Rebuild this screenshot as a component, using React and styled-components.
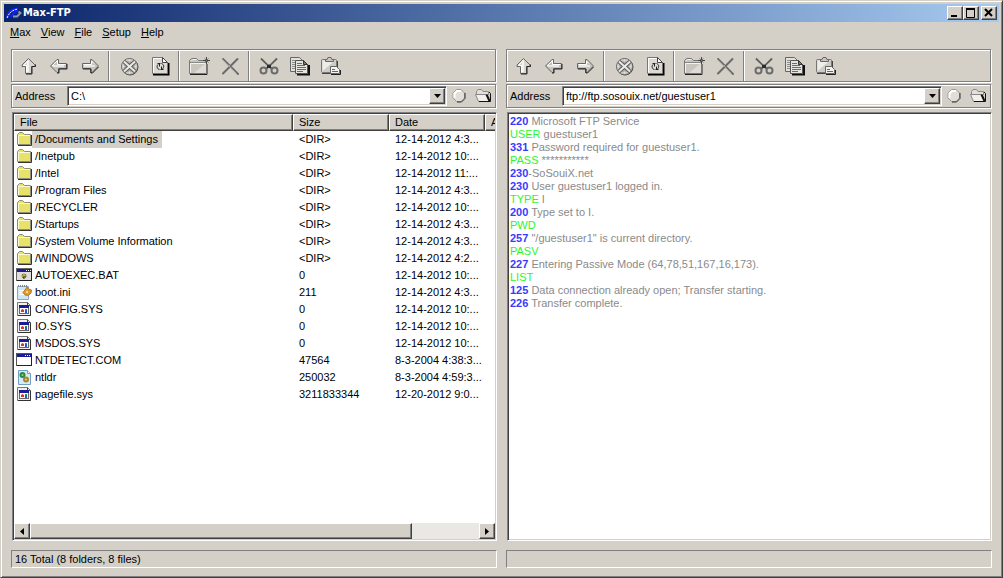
import React, { useState } from 'react';
import styled, { createGlobalStyle, css } from 'styled-components';

const color = {
  face: '#d4d0c8',
  light: '#ffffff',
  shadow: '#808080',
  dark: '#404040',
  code: '#3a3aff',
  command: '#2cf52c',
  message: '#8a8a8a',
};

const raised = css`
  border:1px solid;
  border-color:${color.light} ${color.dark} ${color.dark} ${color.light};
  box-shadow:inset -1px -1px 0 ${color.shadow};
`;

const sunken = css`
  border:1px solid;
  border-color:${color.shadow} ${color.light} ${color.light} ${color.shadow};
  box-shadow:inset 1px 1px 0 ${color.dark}, inset -1px -1px 0 ${color.face};
`;

const menuList = ['Max', 'View', 'File', 'Setup', 'Help'];

const toolGroups = [
  ['up', 'back', 'forward'],
  ['stop', 'refresh'],
  ['folder', 'remove'],
  ['cut', 'copy', 'paste'],
];

const fileList = [
  { name: '/Documents and Settings', size: '<DIR>', date: '12-14-2012 4:3...', icon: 'dir' },
  { name: '/Inetpub', size: '<DIR>', date: '12-14-2012 10:...', icon: 'dir' },
  { name: '/Intel', size: '<DIR>', date: '12-14-2012 11:...', icon: 'dir' },
  { name: '/Program Files', size: '<DIR>', date: '12-14-2012 4:3...', icon: 'dir' },
  { name: '/RECYCLER', size: '<DIR>', date: '12-14-2012 10:...', icon: 'dir' },
  { name: '/Startups', size: '<DIR>', date: '12-14-2012 4:3...', icon: 'dir' },
  { name: '/System Volume Information', size: '<DIR>', date: '12-14-2012 4:3...', icon: 'dir' },
  { name: '/WINDOWS', size: '<DIR>', date: '12-14-2012 4:2...', icon: 'dir' },
  { name: 'AUTOEXEC.BAT', size: '0', date: '12-14-2012 10:...', icon: 'bat' },
  { name: 'boot.ini', size: '211', date: '12-14-2012 4:3...', icon: 'ini' },
  { name: 'CONFIG.SYS', size: '0', date: '12-14-2012 10:...', icon: 'sys' },
  { name: 'IO.SYS', size: '0', date: '12-14-2012 10:...', icon: 'sys' },
  { name: 'MSDOS.SYS', size: '0', date: '12-14-2012 10:...', icon: 'sys' },
  { name: 'NTDETECT.COM', size: '47564', date: '8-3-2004 4:38:3...', icon: 'com' },
  { name: 'ntldr', size: '250032', date: '8-3-2004 4:59:3...', icon: 'ntldr' },
  { name: 'pagefile.sys', size: '3211833344', date: '12-20-2012 9:0...', icon: 'sys' },
];

const logList = [
  { code: '220', text: ' Microsoft FTP Service' },
  { command: 'USER', text: ' guestuser1' },
  { code: '331', text: ' Password required for guestuser1.' },
  { command: 'PASS', text: ' ***********' },
  { code: '230', text: '-SoSouiX.net' },
  { code: '230', text: ' User guestuser1 logged in.' },
  { command: 'TYPE', text: ' I' },
  { code: '200', text: ' Type set to I.' },
  { command: 'PWD', text: '' },
  { code: '257', text: ' "/guestuser1" is current directory.' },
  { command: 'PASV', text: '' },
  { code: '227', text: ' Entering Passive Mode (64,78,51,167,16,173).' },
  { command: 'LIST', text: '' },
  { code: '125', text: ' Data connection already open; Transfer starting.' },
  { code: '226', text: ' Transfer complete.' },
];

// 20x20 toolbar drawings
const toolIcons = {
  up: (
    <>
      <path d="M10.5 2.5 L17 9 V10.5 H13.5 V17.5 H7.5 V10.5 H4 V9 Z" fill="#d9d6d0" stroke="#666" />
      <path d="M10.5 4 L5.5 9.5 H8.5 V16.5" fill="none" stroke="#fff" />
      <path d="M10 5 V16" stroke="#f4f3f1" strokeWidth="2" />
      <path d="M17.5 8.5 V10.5 H14 V18 H8" fill="none" stroke="#222" />
    </>
  ),
  back: (
    <>
      <path d="M1.5 10 L8 3.5 H9.5 V7.5 H17.5 V12.5 H9.5 V16.5 H8 Z" fill="#c6c3bc" stroke="#666" />
      <path d="M3 10 L8.5 4.5 V8.5 H16.5" fill="none" stroke="#fff" />
      <path d="M4 10 H15" stroke="#e9e7e3" strokeWidth="2" />
      <path d="M18 8 V13 H10 V17 H8" fill="none" stroke="#222" />
    </>
  ),
  forward: (
    <>
      <path d="M18.5 10 L12 3.5 H10.5 V7.5 H2.5 V12.5 H10.5 V16.5 H12 Z" fill="#c6c3bc" stroke="#666" />
      <path d="M3.5 8.5 H11.5 V5 L14 7.5" fill="none" stroke="#fff" />
      <path d="M4 10 H15" stroke="#e9e7e3" strokeWidth="2" />
      <path d="M3 13 H11 V17 H12.5 L18.5 11" fill="none" stroke="#222" />
    </>
  ),
  stop: (
    <>
      <circle cx="11" cy="11" r="8" fill="none" stroke="#444" />
      <circle cx="10.5" cy="10.5" r="8" fill="#aeaba5" stroke="#6c6c6c" />
      <circle cx="10.5" cy="10.5" r="6.5" fill="none" stroke="#d0cdc7" strokeWidth="2" />
      <path d="M5 5.5 L16 15.5 M16 5.5 L5 15.5" stroke="#5c5c5c" strokeWidth="4" />
      <path d="M5 5.5 L16 15.5 M16 5.5 L5 15.5" stroke="#eceae6" strokeWidth="2" />
      <path d="M10.5 3.5 V5.5 M10.5 15.5 V17.5 M3.5 10.5 H5.5 M15.5 10.5 H17.5" stroke="#e4e2dd" />
    </>
  ),
  refresh: (
    <>
      <path d="M3 18.5 H18.5 V7" fill="none" stroke="#000" strokeWidth="2" />
      <path d="M2.5 1.5 H12.5 L17.5 6.5 V17.5 H2.5 Z" fill="#dddad3" stroke="#777" />
      <path d="M12.5 1.5 V6.5 H17.5 Z" fill="#fff" stroke="#444" />
      <path d="M3.5 16.5 V2.5 H11.5" fill="none" stroke="#fff" />
      <path d="M9.5 13.5 C6.5 13 6.5 9.5 8.5 8 M10.5 7.5 H7.5 M9.5 7.5 V10.5" fill="none" stroke="#222" />
      <path d="M11.5 7.5 C14.5 8.5 14 11.5 12.5 13 M10.5 13.5 H13.5 M11.5 13.5 V10.5" fill="none" stroke="#222" />
    </>
  ),
  folder: (
    <>
      <path d="M1 18.5 H18 V8" fill="none" stroke="#222" />
      <path d="M0.5 17.5 V4.5 L2.5 2.5 H7.5 L9.5 4.5 H17.5 V17.5 Z" fill="#c9c6bf" stroke="#777" />
      <path d="M1.5 16.5 V7.5 H16.5 M2.5 4.5 L3.5 3.5 H7.5" fill="none" stroke="#f4f3f0" />
      <path d="M1 6.5 H17" stroke="#888" />
      <path d="M5 17 L17 7 V17 Z" fill="#dedbd5" />
      <path d="M17.5 1 V8 M14 4.5 H21" stroke="#444" />
      <path d="M15.5 2.5 L19.5 6.5 M19.5 2.5 L15.5 6.5" stroke="#777" />
    </>
  ),
  remove: (
    <>
      <path d="M3 3 L18 18 M17.5 3 L3 17.5" stroke="#6a6a6a" strokeWidth="2" strokeLinecap="round" />
      <path d="M2 3 L16.5 17.5 M16.5 2.5 L2.5 16.5" stroke="#a5a29c" />
    </>
  ),
  cut: (
    <>
      <path d="M2 2.5 L13 13 M18 2.5 L7 13" stroke="#606060" strokeWidth="2" />
      <path d="M3 2 L9 8 M16.5 2.5 L11 8" stroke="#b0ada7" />
      <path d="M8 10.5 H12" stroke="#2c2c2c" strokeWidth="3" />
      <circle cx="4.5" cy="14.5" r="3" fill="#d4d0c8" stroke="#6c6c6c" strokeWidth="2" />
      <circle cx="15.5" cy="14.5" r="3" fill="#d4d0c8" stroke="#6c6c6c" strokeWidth="2" />
    </>
  ),
  copy: (
    <>
      <path d="M0.5 1.5 H9.5 L12.5 4.5 V15.5 H0.5 Z" fill="#e2e0da" stroke="#666" />
      <path d="M2 4.5 H5 M2 6.5 H5 M2 8.5 H5 M2 10.5 H5 M2 12.5 H5" stroke="#8c8c8c" />
      <path d="M7 18.5 H19 V9" fill="none" stroke="#111" strokeWidth="2" />
      <path d="M5.5 4.5 H13.5 L17.5 8.5 V17.5 H5.5 Z" fill="#e6e4de" stroke="#555" />
      <path d="M13.5 4.5 V8.5 H17.5 Z" fill="#777" stroke="#333" />
      <path d="M7 7.5 H12 M7 9.5 H15 M7 11.5 H16 M7 13.5 H16 M7 15.5 H13" stroke="#6c6c6c" />
    </>
  ),
  paste: (
    <>
      <path d="M1 17.5 H16.5 V5" fill="none" stroke="#444" />
      <rect x="0.5" y="3.5" width="15" height="13" rx="1" fill="#cfccc6" stroke="#777" />
      <path d="M1.5 15 V4.5 H14 Z" fill="#efedea" />
      <path d="M4.5 5.5 V3.5 H6 L7 1.5 H10 L11 3.5 H12.5 V5.5 Z" fill="#c4c4c4" stroke="#666" />
      <path d="M10 18.5 H19.5 V14" fill="none" stroke="#222" />
      <path d="M9.5 10.5 H15.5 L18.5 13.5 V17.5 H9.5 Z" fill="#f4f3f0" stroke="#666" />
      <path d="M11 13.5 H14 M11 15.5 H17" stroke="#666" />
    </>
  ),
};

// 16x16 file type drawings
const fileIcons = {
  dir: (
    <>
      <path d="M2 14.5 H15.5 V4" fill="none" stroke="#333" />
      <path d="M1.5 13.5 V3.5 L3.5 1.5 H6.5 L8.5 3.5 H14.5 V13.5 Z" fill="#e6e26a" stroke="#8d8d78" />
      <path d="M2.5 13 V4.5 H14" fill="none" stroke="#fbfad2" />
    </>
  ),
  bat: (
    <>
      <rect x="0.5" y="1.5" width="15" height="12" fill="#e0deda" stroke="#666" />
      <rect x="1" y="2" width="14" height="3" fill="#1c1c96" />
      <path d="M10 3.5 H11 M12 3.5 H13 M14 3.5 H15" stroke="#fff" />
      <path d="M15.5 2 V14 M1 13.5 H16" stroke="#222" />
      <circle cx="8" cy="9" r="2" fill="#c8c03a" stroke="#4a4820" strokeDasharray="2 1" />
      <path d="M8 9 V12" stroke="#222" />
    </>
  ),
  ini: (
    <>
      <path d="M1.5 2.5 H12.5 V15.5 H1.5 Z" fill="#cfe6f5" stroke="#86a9c4" />
      <path d="M2.5 3 V1 M4.5 3 V1 M6.5 3 V1 M8.5 3 V1 M10.5 3 V1" stroke="#789" />
      <path d="M3 6.5 H8 M3 8.5 H7 M3 10.5 H8" stroke="#fff" />
      <path d="M11 3 L12.5 5 L15.5 6 L15 9 L12.5 11.5 L9 11 L7 8.5 L9 6 Z" fill="#e29a2e" stroke="#b87a22" />
      <circle cx="11" cy="8" r="1" fill="#fff0c0" />
    </>
  ),
  sys: (
    <>
      <path d="M1.5 1.5 H11.5 L14.5 4.5 V14.5 H1.5 Z" fill="#f2f1ef" stroke="#777" />
      <path d="M11.5 1.5 V4.5 H14.5" fill="none" stroke="#444" />
      <path d="M14.5 5 V14.5 H2" fill="none" stroke="#333" />
      <rect x="3.5" y="4.5" width="9" height="8" fill="#fff" stroke="#666" />
      <rect x="3" y="4" width="10" height="3" fill="#1c1c96" />
      <path d="M5 9 L6.5 8 L8 9 V11 H5 Z" fill="#d8352b" />
      <path d="M9 8 H11 V10 H9 Z" fill="#2c9c48" />
      <path d="M9 9 H11 V12 H9 Z" fill="#2b54d8" />
    </>
  ),
  com: (
    <>
      <rect x="0.5" y="1.5" width="15" height="12" fill="#fff" stroke="#555" />
      <rect x="1" y="2" width="14" height="3" fill="#1c1c96" />
      <path d="M9 3.5 H10 M11 3.5 H12 M13 3.5 H14" stroke="#fff" />
      <path d="M15.5 2 V14 M1 13.5 H16" stroke="#222" />
    </>
  ),
  ntldr: (
    <>
      <path d="M2.5 1.5 H11.5 L14.5 4.5 V15.5 H2.5 Z" fill="#d5ebfa" stroke="#6f9fc8" />
      <path d="M11.5 1.5 V4.5 H14.5" fill="#fff" stroke="#6f9fc8" />
      <circle cx="6.5" cy="6" r="2" fill="#8fd08a" stroke="#2c8a3c" strokeWidth="2" />
      <circle cx="10" cy="10.5" r="2" fill="#f0d070" stroke="#a8862c" strokeWidth="2" />
    </>
  ),
};

function Address({ id, value }) {
  const [url, setUrl] = useState(value);
  return (
    <Styled.AddressBar>
      <Styled.Label htmlFor={id}>Address</Styled.Label>
      <Styled.Combo>
        <Styled.Input id={id} value={url} onChange={e => setUrl(e.target.value)} />
        <Styled.Drop type="button" aria-label="Show addresses">
          <svg width="7" height="4" viewBox="0 0 7 4"><path d="M0 0 H7 L3.5 4 Z" /></svg>
        </Styled.Drop>
      </Styled.Combo>
      <Styled.AddressButton type="button" aria-label="Connect">
        <svg width="14" height="14" viewBox="0 0 14 14">
          <path d="M4.5 0.5 H9 L12.5 4 V9 L9 12.5 H4.5 L1 9 V4 Z" fill="#e0ded9" stroke="#999" />
          <path d="M2.5 9 V4.5 L5 2 H9" fill="none" stroke="#fff" strokeWidth="2" />
          <path d="M13 4 V9.5 L9.5 13 H5" fill="none" stroke="#333" />
        </svg>
      </Styled.AddressButton>
      <Styled.AddressButton type="button" aria-label="Browse">
        <svg width="18" height="14" viewBox="0 0 18 14">
          <path d="M2.5 6 V2.5 L4 0.5 H7.5 L9 2.5 H14.5 V6" fill="#e2e0db" stroke="#888" />
          <path d="M1.5 5.5 H12.5 L15.5 12.5 H4.5 Z" fill="#f1f0ed" stroke="#888" />
          <path d="M15 3 L16.5 4.5 V12.5 H5" fill="none" stroke="#111" />
          <path d="M12.5 5.5 L15.5 12" stroke="#111" strokeWidth="2" />
        </svg>
      </Styled.AddressButton>
    </Styled.AddressBar>
  );
}

function Toolbar() {
  return (
    <Styled.Toolbar>
      {toolGroups.map(group => (
        <Styled.ToolGroup key={group[0]}>
          {group.map(name => (
            <Styled.Tool type="button" key={name} aria-label={name}>
              <svg width="20" height="20" viewBox="0 0 20 20" overflow="visible">{toolIcons[name]}</svg>
            </Styled.Tool>
          ))}
        </Styled.ToolGroup>
      ))}
    </Styled.Toolbar>
  );
}

function FileTable() {
  const [selected, setSelected] = useState(0);
  return (
    <Styled.View>
      <Styled.TableArea>
        <Styled.Table>
          <colgroup>
            <Styled.Col $width={279} />
            <Styled.Col $width={96} />
            <Styled.Col $width={96} />
            <Styled.Col $width={96} />
          </colgroup>
          <thead>
            <tr>
              <th>File</th>
              <th>Size</th>
              <th>Date</th>
              <th>Attr</th>
            </tr>
          </thead>
          <tbody>
            {fileList.map((item, i) => (
              <tr key={item.name} onClick={() => setSelected(i)}>
                <td>
                  <Styled.FileName>
                    <svg width="16" height="16" viewBox="0 0 16 16">{fileIcons[item.icon]}</svg>
                    <Styled.FileText $active={selected === i}>{item.name}</Styled.FileText>
                  </Styled.FileName>
                </td>
                <td>{item.size}</td>
                <td>{item.date}</td>
                <td />
              </tr>
            ))}
          </tbody>
        </Styled.Table>
      </Styled.TableArea>
      <Styled.Scroll>
        <Styled.ScrollButton type="button" aria-label="Scroll left">
          <svg width="4" height="7" viewBox="0 0 4 7"><path d="M4 0 V7 L0 3.5 Z" /></svg>
        </Styled.ScrollButton>
        <Styled.Track><Styled.Thumb /></Styled.Track>
        <Styled.ScrollButton type="button" aria-label="Scroll right">
          <svg width="4" height="7" viewBox="0 0 4 7"><path d="M0 0 V7 L4 3.5 Z" /></svg>
        </Styled.ScrollButton>
      </Styled.Scroll>
    </Styled.View>
  );
}

function App() {
  return (
    <>
      <GlobalStyle />
      <Styled.Window>
        <Styled.TitleBar>
          <svg width="16" height="14" viewBox="0 0 16 14">
            <path d="M1 11 C3 6 6 3 12 3" fill="none" stroke="#1020ff" strokeWidth="3" />
            <path d="M1 12 C3 7 6 4 12 3" fill="none" stroke="#fff" strokeDasharray="2 1" />
            <path d="M5 11 C6 8 8 6 12 5" fill="none" stroke="#1020ff" strokeWidth="2" />
            <path d="M7 10.5 H11 L14.5 7 L12.5 5.5" fill="none" stroke="#8d98a8" strokeWidth="2" />
          </svg>
          <Styled.Title>Max-FTP</Styled.Title>
          <Styled.WinButton type="button" aria-label="Minimize">
            <svg width="10" height="10" viewBox="0 0 10 10"><path d="M1 8 H7" stroke="#000" strokeWidth="2" /></svg>
          </Styled.WinButton>
          <Styled.WinButton type="button" aria-label="Maximize">
            <svg width="10" height="10" viewBox="0 0 10 10"><path d="M0.5 1 V9.5 H8.5 V1" fill="none" stroke="#000" /><path d="M0 1 H9" stroke="#000" strokeWidth="2" /></svg>
          </Styled.WinButton>
          <Styled.WinButton type="button" aria-label="Close" $gap>
            <svg width="10" height="10" viewBox="0 0 10 10"><path d="M1 1 L8 8 M8 1 L1 8" stroke="#000" strokeWidth="2" /></svg>
          </Styled.WinButton>
        </Styled.TitleBar>

        <Styled.Menu>
          {menuList.map(item => (
            <Styled.MenuItem type="button" key={item}><u>{item[0]}</u>{item.slice(1)}</Styled.MenuItem>
          ))}
        </Styled.Menu>

        <Styled.Panes>
          <Styled.Pane>
            <Toolbar />
            <Address id="local-address" value="C:\" />
            <FileTable />
            <Styled.Status>16 Total (8 folders, 8 files)</Styled.Status>
          </Styled.Pane>

          <Styled.Pane>
            <Toolbar />
            <Address id="remote-address" value="ftp://ftp.sosouix.net/guestuser1" />
            <Styled.View>
              <Styled.Log>
                {logList.map((line, i) => (
                  <li key={i}>
                    {line.code && <Styled.Code>{line.code}</Styled.Code>}
                    {line.command && <Styled.Command>{line.command}</Styled.Command>}
                    {line.text}
                  </li>
                ))}
              </Styled.Log>
            </Styled.View>
            <Styled.Status />
          </Styled.Pane>
        </Styled.Panes>
      </Styled.Window>
    </>
  );
}

const GlobalStyle = createGlobalStyle`
  *{ box-sizing:border-box; }
  body{
    margin:0;
    background:${color.face};
    color:#000;
    font:11px/13px "Liberation Sans", Arial, sans-serif;
  }
  button, input{
    margin:0;
    padding:0;
    border:0;
    border-radius:0;
    background:none;
    color:inherit;
    font:inherit;
  }
  svg{ display:block; flex:none; }
`;

const Styled = {
  Window: styled.div`
    display:flex;
    flex-direction:column;
    min-height:100vh;
    padding:3px;
    border:1px solid;
    border-color:${color.face} ${color.dark} ${color.dark} ${color.face};
    box-shadow:inset 1px 1px 0 ${color.light}, inset -1px -1px 0 ${color.shadow};
  `,
  TitleBar: styled.header`
    display:flex;
    align-items:center;
    height:18px;
    padding:0 2px;
    background:linear-gradient(90deg, #0a246a, #a6caf0);
  `,
  Title: styled.h1`
    flex:1;
    margin:0;
    padding-left:1px;
    color:#fff;
    font:bold 11px/16px "DejaVu Sans Condensed", "DejaVu Sans", sans-serif;
  `,
  WinButton: styled.button`
    ${raised}
    display:flex;
    align-items:center;
    justify-content:center;
    width:16px;
    height:14px;
    margin-left:${p => (p.$gap ? 2 : 0)}px;
    background:${color.face};
  `,
  Menu: styled.nav`
    display:flex;
    height:20px;
    padding-left:1px;
  `,
  MenuItem: styled.button`
    padding:0 5px;
  `,
  Panes: styled.main`
    flex:1;
    display:grid;
    grid-template-columns:1fr 1fr;
    gap:9px;
    padding:7px 7px 6px;
  `,
  Pane: styled.section`
    display:flex;
    flex-direction:column;
    min-width:0;
  `,
  Toolbar: styled.div`
    display:flex;
    height:33px;
    margin:0 1px 2px 0;
    border:1px solid ${color.shadow};
    box-shadow:inset 1px 1px 0 ${color.light}, 1px 1px 0 ${color.light};
  `,
  ToolGroup: styled.div`
    display:flex;
    align-items:center;
    & + &{
      margin:1px 0 0 3px;
      padding-left:4px;
      border-left:1px solid ${color.shadow};
      box-shadow:inset 1px 0 0 ${color.light};
    }
  `,
  Tool: styled.button`
    display:flex;
    align-items:center;
    justify-content:center;
    width:31px;
    height:30px;
  `,
  AddressBar: styled.div`
    display:flex;
    align-items:center;
    height:24px;
    margin:0 1px 4px 0;
    padding-left:3px;
    border:1px solid ${color.shadow};
    box-shadow:inset 1px 1px 0 ${color.light}, 1px 1px 0 ${color.light};
  `,
  Label: styled.label`
    width:52px;
  `,
  Combo: styled.div`
    ${sunken}
    flex:1;
    display:flex;
    min-width:0;
    height:20px;
    padding:1px;
    background:#fff;
  `,
  Input: styled.input`
    flex:1;
    min-width:0;
    padding:0 2px;
    outline:0;
  `,
  Drop: styled.button`
    ${raised}
    display:flex;
    align-items:center;
    justify-content:center;
    width:16px;
    background:${color.face};
  `,
  AddressButton: styled.button`
    display:flex;
    align-items:center;
    justify-content:center;
    width:24px;
    height:20px;
  `,
  View: styled.div`
    ${sunken}
    flex:1;
    display:flex;
    flex-direction:column;
    margin-left:1px;
    padding:1px;
    background:#fff;
  `,
  TableArea: styled.div`
    flex:1;
    overflow:hidden;
  `,
  Table: styled.table`
    width:567px;
    table-layout:fixed;
    border-collapse:separate;
    border-spacing:0;
    th, td{
      height:17px;
      padding:0 6px;
      overflow:hidden;
      font-weight:normal;
      text-align:left;
      white-space:nowrap;
    }
    th{
      ${raised}
      padding:0 5px;
      background:${color.face};
    }
    td:first-child{
      padding:0 2px;
    }
  `,
  Col: styled.col`
    width:${p => p.$width}px;
  `,
  FileName: styled.div`
    display:flex;
    height:17px;
  `,
  FileText: styled.span`
    padding:0 4px 0 3px;
    line-height:17px;
    background:${p => (p.$active ? color.face : 'transparent')};
  `,
  Scroll: styled.div`
    display:flex;
    height:16px;
  `,
  ScrollButton: styled.button`
    ${raised}
    display:flex;
    align-items:center;
    justify-content:center;
    width:16px;
    background:${color.face};
  `,
  Track: styled.div`
    flex:1;
    display:flex;
    background:#eae8e4;
  `,
  Thumb: styled.div`
    ${raised}
    width:85%;
    background:${color.face};
  `,
  Log: styled.ol`
    margin:0;
    padding:1px;
    list-style:none;
    color:${color.message};
    white-space:pre-wrap;
  `,
  Code: styled.b`
    color:${color.code};
  `,
  Command: styled.span`
    color:${color.command};
  `,
  Status: styled.footer`
    height:18px;
    margin-top:9px;
    padding:2px 3px;
    border:1px solid;
    border-color:${color.shadow} ${color.light} ${color.light} ${color.shadow};
  `,
};

export default App;
